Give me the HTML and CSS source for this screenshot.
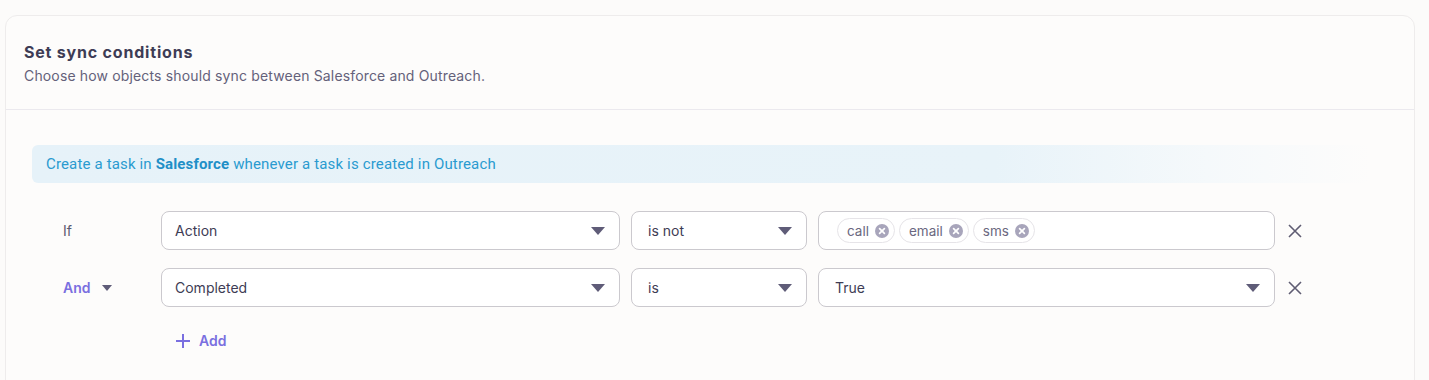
FILE: index.html
```html
<!DOCTYPE html>
<html lang="en">
<head>
    <meta charset="UTF-8">
    <meta name="viewport" content="width=device-width, initial-scale=1.0">
    <title>Set sync conditions</title>
    <link rel="stylesheet" href="styles.css">
</head>
<body>
    <div class="card">
        <div class="card-header">
            <h2>Set sync conditions</h2>
            <p>Choose how objects should sync between Salesforce and Outreach.</p>
        </div>
        <div class="card-body">
            <div class="banner">Create a task in <b>Salesforce</b> whenever a task is created in Outreach</div>

            <div class="conditions">
                <div class="row">
                    <div class="label">If</div>
                    <div class="select field-wide">
                        <span>Action</span>
                        <span class="caret"></span>
                    </div>
                    <div class="select field-op">
                        <span>is not</span>
                        <span class="caret"></span>
                    </div>
                    <div class="select field-value chips">
                        <span class="chip">call <span class="chip-x"><svg width="14" height="14" viewBox="0 0 14 14"><circle cx="7" cy="7" r="7" fill="#a8a5bb"/><path d="M4.6 4.6l4.8 4.8M9.4 4.6l-4.8 4.8" stroke="#fff" stroke-width="1.7" stroke-linecap="round"/></svg></span></span>
                        <span class="chip">email <span class="chip-x"><svg width="14" height="14" viewBox="0 0 14 14"><circle cx="7" cy="7" r="7" fill="#a8a5bb"/><path d="M4.6 4.6l4.8 4.8M9.4 4.6l-4.8 4.8" stroke="#fff" stroke-width="1.7" stroke-linecap="round"/></svg></span></span>
                        <span class="chip">sms <span class="chip-x"><svg width="14" height="14" viewBox="0 0 14 14"><circle cx="7" cy="7" r="7" fill="#a8a5bb"/><path d="M4.6 4.6l4.8 4.8M9.4 4.6l-4.8 4.8" stroke="#fff" stroke-width="1.7" stroke-linecap="round"/></svg></span></span>
                    </div>
                    <button class="remove"><svg width="14" height="14" viewBox="0 0 14 14"><path d="M1 1l12 12M13 1L1 13" stroke="#5f5c72" stroke-width="1.6"/></svg></button>
                </div>

                <div class="row">
                    <div class="label link">And <span class="caret small"></span></div>
                    <div class="select field-wide">
                        <span>Completed</span>
                        <span class="caret"></span>
                    </div>
                    <div class="select field-op">
                        <span>is</span>
                        <span class="caret"></span>
                    </div>
                    <div class="select field-value">
                        <span>True</span>
                        <span class="caret"></span>
                    </div>
                    <button class="remove"><svg width="14" height="14" viewBox="0 0 14 14"><path d="M1 1l12 12M13 1L1 13" stroke="#5f5c72" stroke-width="1.6"/></svg></button>
                </div>

                <button class="add-btn"><svg width="14" height="14" viewBox="0 0 14 14"><path d="M7 0v14M0 7h14" stroke="#7a6fe0" stroke-width="2"/></svg> Add</button>
            </div>
        </div>
    </div>
</body>
</html>
```

FILE: styles.css
```css
body {
    font-family: Inter, 'Noto Sans', sans-serif;
    background-color: #fcfbfa;
    margin: 0;
    padding: 15px 14px 0 5px;
    color: #3e3c55;
}
.card {
    background-color: #fdfcfb;
    border: 1px solid #eeecec;
    border-radius: 12px;
    height: 400px;
}
.card-header {
    padding: 26px 18px 23px;
    border-bottom: 1px solid #ebe9ee;
}
.card-header h2 {
    margin: 0;
    font-size: 16px;
    line-height: 20px;
    font-weight: 700;
    letter-spacing: 0.8px;
    color: #3e3c55;
}
.card-header p {
    margin: 4px 0 0;
    font-size: 14px;
    line-height: 20px;
    letter-spacing: 0.15px;
    color: #64617a;
}
.card-body {
    padding: 35px 26px 0;
}
.banner {
    font-family: Roboto, sans-serif;
    font-size: 15px;
    letter-spacing: 0.15px;
    height: 38px;
    line-height: 38px;
    padding-left: 14px;
    width: 1324px;
    border-radius: 6px;
    color: #2a9bd0;
    background: linear-gradient(90deg, #e6f2f9 0%, #e8f3f9 72%, rgba(240, 247, 251, 0.6) 88%, rgba(253, 252, 251, 0) 100%);
}
.banner b {
    font-weight: 700;
    color: #1f8fc7;
}
.conditions {
    margin-top: 28px;
    padding-left: 31px;
}
.row {
    display: flex;
    align-items: center;
    margin-bottom: 18px;
}
.label {
    width: 98px;
    flex-shrink: 0;
    font-size: 14px;
    color: #5c5a70;
    display: flex;
    align-items: center;
}
.label.link {
    color: #7a6fe0;
    font-weight: 600;
}
.select {
    box-sizing: border-box;
    height: 39px;
    background-color: #fff;
    border: 1px solid #cbc9ce;
    border-radius: 8px;
    display: flex;
    align-items: center;
    justify-content: space-between;
    padding: 0 14px 0 16px;
    font-size: 14px;
    color: #3e3c55;
    margin-right: 11px;
}
.field-wide {
    width: 459px;
    padding-left: 13px;
}
.field-op {
    width: 176px;
}
.field-value {
    width: 457px;
    margin-right: 0;
}
.chips {
    justify-content: flex-start;
    padding-left: 18px;
    gap: 4px;
}
.chip {
    display: inline-flex;
    align-items: center;
    gap: 6px;
    height: 25px;
    box-sizing: border-box;
    padding: 0 5px 0 9px;
    border: 1px solid #e6e4e8;
    border-radius: 13px;
    font-size: 13.5px;
    color: #6a6780;
}
.chip-x {
    display: flex;
}
.caret {
    width: 0;
    height: 0;
    border-left: 7px solid transparent;
    border-right: 7px solid transparent;
    border-top: 8px solid #5f5c78;
}
.caret.small {
    border-left-width: 5px;
    border-right-width: 5px;
    border-top-width: 6px;
    margin-left: 11px;
}
.remove {
    background: none;
    border: none;
    padding: 0;
    margin-left: 13px;
    display: flex;
    cursor: pointer;
}
.add-btn {
    background: none;
    border: none;
    padding: 0;
    margin-left: 113px;
    margin-top: 25px;
    display: flex;
    align-items: center;
    gap: 9px;
    font-family: Inter, sans-serif;
    font-size: 14px;
    font-weight: 600;
    color: #7a6fe0;
    cursor: pointer;
}
```
